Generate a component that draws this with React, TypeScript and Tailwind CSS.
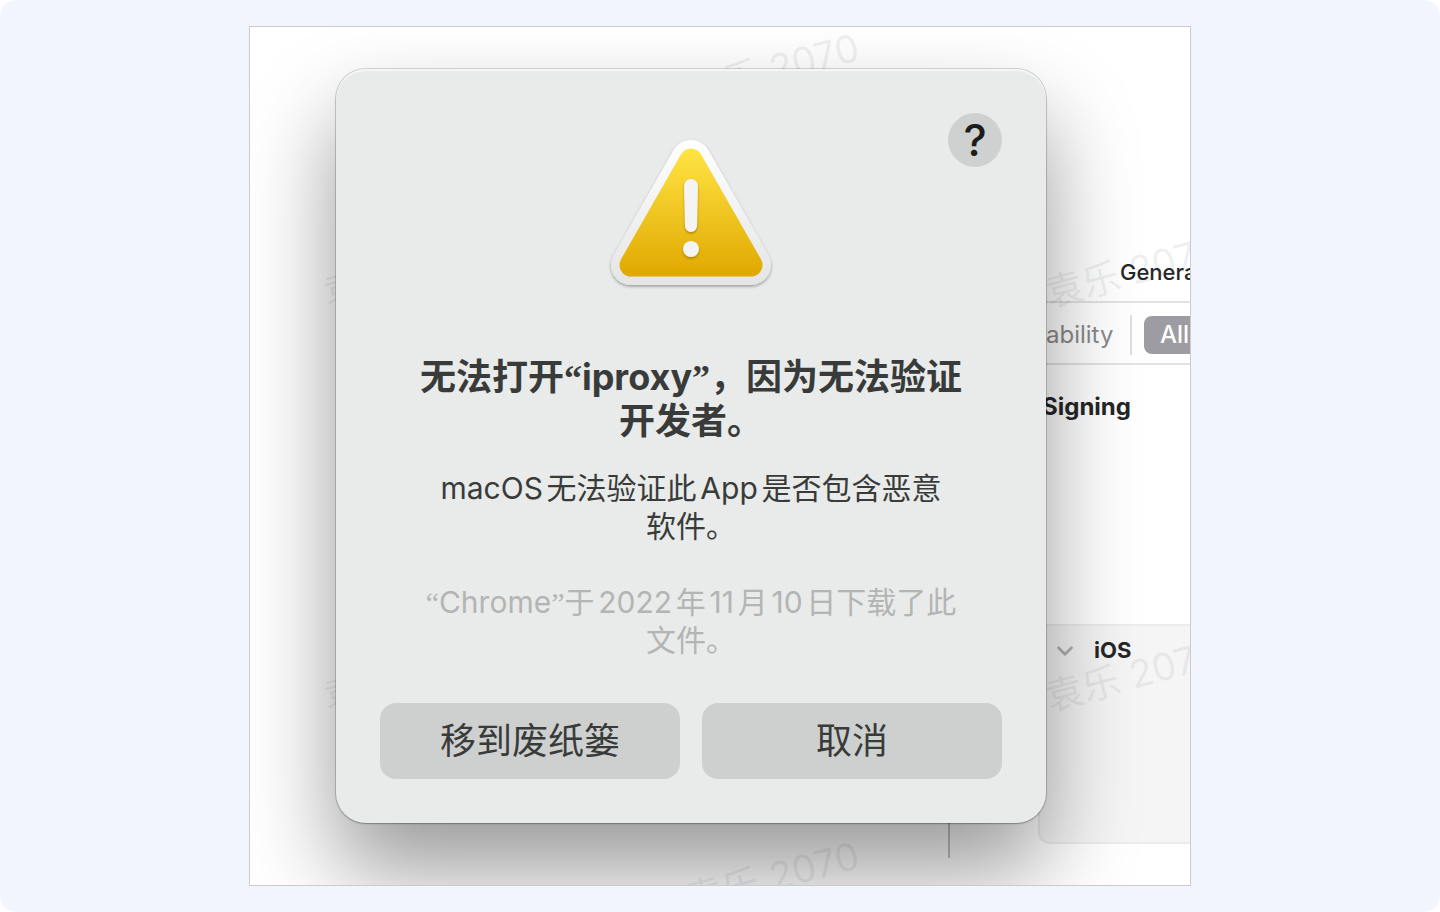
import type { ReactNode } from "react";
import { ChevronDown } from "lucide-react";

type WatermarkProps = {
  className: string;
};

function Watermark({ className }: WatermarkProps) {
  return (
    <span
      aria-hidden="true"
      className={`absolute flex h-12 w-48 -rotate-15 items-center justify-center whitespace-nowrap text-[38px] text-[#5a646e]/10 ${className}`}
    >
      袁乐 2070
    </span>
  );
}

// curly quotes come from the serif face, Inter's are wedge shaped
function Quoted({ children }: { children: ReactNode }) {
  return (
    <>
      <span className="font-['Liberation_Serif',serif] leading-none">“</span>
      {children}
      <span className="font-['Liberation_Serif',serif] leading-none">”</span>
    </>
  );
}

function WarningIcon() {
  return (
    <svg
      className="mt-[22px] h-40 w-[168px] overflow-visible"
      viewBox="0 0 168 160"
      fill="none"
      role="img"
      aria-label="警告"
    >
      <defs>
        <linearGradient id="rim" gradientUnits="userSpaceOnUse" x1="0" y1="5" x2="0" y2="150">
          <stop offset="0" stopColor="#ffffff" />
          <stop offset="1" stopColor="#e6e5e6" />
        </linearGradient>
        <linearGradient id="sign" gradientUnits="userSpaceOnUse" x1="0" y1="14" x2="0" y2="141">
          <stop offset="0" stopColor="#ffe444" />
          <stop offset="1" stopColor="#e0a800" />
        </linearGradient>
        <filter id="drop" filterUnits="userSpaceOnUse" x="-10" y="-10" width="190" height="180">
          <feDropShadow dx="0" dy="1.5" stdDeviation="1.5" floodColor="#000" floodOpacity="0.35" />
        </filter>
        <filter id="markDrop" filterUnits="userSpaceOnUse" x="60" y="30" width="50" height="110">
          <feDropShadow dx="0" dy="1.5" stdDeviation="0.8" floodColor="#7a5a00" floodOpacity="0.6" />
        </filter>
      </defs>
      <path
        d="M84 25 144 130H24Z"
        stroke="url(#rim)"
        strokeWidth="40"
        strokeLinejoin="round"
        filter="url(#drop)"
      />
      <path
        d="M84 25 144 130H24Z"
        fill="url(#sign)"
        stroke="url(#sign)"
        strokeWidth="23"
        strokeLinejoin="round"
      />
      <g fill="#f4f4f3" filter="url(#markDrop)">
        <path d="M77 51a7 7 0 0 1 14 0L90 91a6 6 0 0 1-12 0Z" />
        <circle cx="84" cy="114" r="8" />
      </g>
    </svg>
  );
}

function EditorWindow() {
  return (
    <div className="col-start-1 row-start-1 flex min-w-0 justify-end gap-[88px] text-[22px] text-[#262626]">
      <div className="mb-[27px] mt-[400px] flex-1 border-r-2 border-[#c4c4c4]" />

      <div className="flex w-[152px] flex-col overflow-hidden">
        <div className="flex h-[276px] items-end border-b-2 border-[#e2e2e2] pb-3 pl-[82px] font-medium">
          General
        </div>
        <div className="flex h-[62px] items-center border-b-2 border-[#e2e2e2] pt-1">
          <span className="w-[92px] shrink-0 pl-2 text-2xl text-[#8a8a8a]">ability</span>
          <span className="h-10 border-l-2 border-[#dedede]" />
          <button
            type="button"
            className="ml-3 h-[38px] shrink-0 rounded-lg bg-[#9d9ca2] px-4 text-2xl font-medium text-white"
          >
            All
          </button>
        </div>
        <h2 className="mt-6 pl-1 text-2xl/9 font-bold">Signing</h2>

        {/* platform section */}
        <div className="mb-[41px] mt-auto h-[220px] rounded-bl-xl border-2 border-r-0 border-[#ececec] bg-[#f5f5f5] px-3 py-2">
          <div className="flex items-center gap-4 font-bold">
            <ChevronDown size={26} color="#b0b0b0" strokeWidth={2.5} />
            iOS
          </div>
        </div>
      </div>
    </div>
  );
}

function Dialog() {
  return (
    <div
      role="alertdialog"
      aria-labelledby="dialog-title"
      className="relative col-start-1 row-start-1 mb-[62px] ml-[86px] mr-36 mt-[42px] rounded-[30px] bg-[#e8ebe9] p-11 text-center text-[#393b3a] shadow-[inset_0_2px_1px_rgba(255,255,255,0.6),0_0_0_1px_rgba(0,0,0,0.15),0_1px_2px_rgba(0,0,0,0.2),0_48px_90px_rgba(0,0,0,0.4)] [text-autospace:normal]"
    >
      <div className="grid grid-cols-[54px_1fr_54px] justify-items-center">
        <span />
        <WarningIcon />
        <button
          type="button"
          className="flex size-[54px] items-center justify-center rounded-full bg-[#cfd1d0] text-[44px] font-medium text-[#1c1c1c]"
        >
          ?
        </button>
      </div>

      <h1 id="dialog-title" className="mt-[60px] text-[36px]/[44px] font-bold">
        无法打开<Quoted>iproxy</Quoted>，因为无法验证
        <br />
        开发者。
      </h1>
      <p className="mt-[26px] text-[30px]/[38px]">
        macOS无法验证此App是否包含恶意
        <br />
        软件。
      </p>
      <p className="mt-[38px] text-[30px]/[38px] text-[#b3b5b4]">
        <Quoted>Chrome</Quoted>于2022年11月10日下载了此
        <br />
        文件。
      </p>

      <div className="mt-11 grid grid-cols-2 gap-[22px] text-[36px]">
        <button type="button" className="h-[76px] rounded-2xl bg-[#ced0cf]">
          移到废纸篓
        </button>
        <button type="button" className="h-[76px] rounded-2xl bg-[#ced0cf]">
          取消
        </button>
      </div>
    </div>
  );
}

export default function App() {
  return (
    <div className="bg-white font-[Inter,'Noto_Sans_CJK_SC',sans-serif]" lang="zh-CN">
      <main className="flex min-h-screen items-center justify-center rounded-2xl bg-[#f2f5fe] py-[26px]">
        <div className="relative grid w-full max-w-[942px] overflow-hidden border border-[#cbcbcf] bg-white">
          <EditorWindow />
          <Watermark className="left-[426px] top-[18px]" />
          <Watermark className="left-[64px] top-[220px]" />
          <Watermark className="left-[64px] top-[624px]" />
          <Watermark className="left-[786px] top-[220px]" />
          <Watermark className="left-[786px] top-[624px]" />
          <Watermark className="left-[426px] top-[826px]" />
          <Dialog />
        </div>
      </main>
    </div>
  );
}
